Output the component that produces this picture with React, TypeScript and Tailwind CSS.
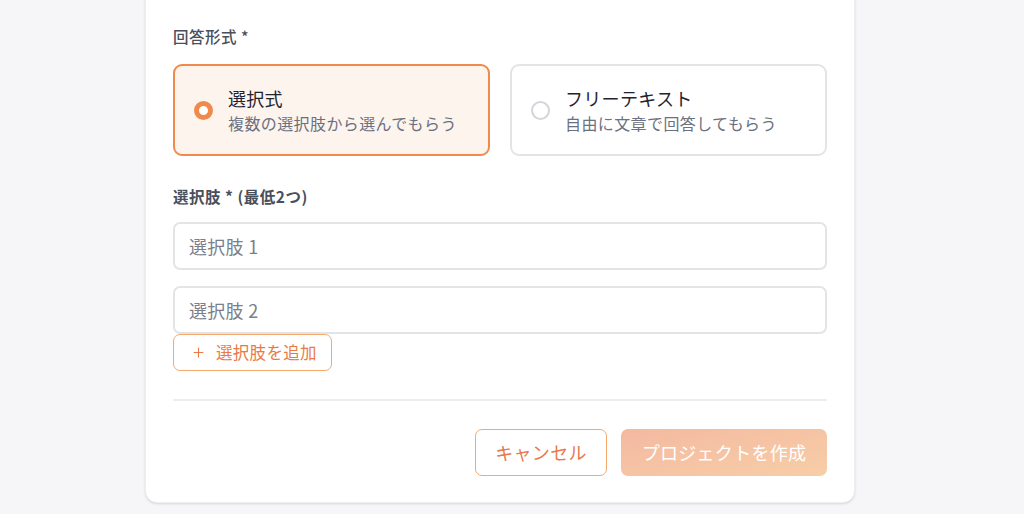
import { Plus } from "lucide-react";

const font = { fontFamily: '"Noto Sans CJK JP", "Noto Sans", sans-serif' };

function OptionCard({ selected, title, desc }: { selected: boolean; title: string; desc: string }) {
  return (
    <div
      className={`flex h-[92px] flex-1 items-center gap-[15px] rounded-[9px] border-2 px-[19px] ${
        selected ? "border-[#ef8a4c] bg-[#fdf4ee]" : "border-[#e3e4e8] bg-white"
      }`}
    >
      {selected ? (
        <span className="h-[19px] w-[19px] shrink-0 rounded-full border-[5px] border-[#ef8a4c] bg-white" />
      ) : (
        <span className="h-[19px] w-[19px] shrink-0 rounded-full border-2 border-[#d3d5da] bg-white" />
      )}
      <div className="flex flex-col">
        <span className="text-[18px] leading-[26px] tracking-[0.3px] text-[#1f2430]">{title}</span>
        <span className="text-[16px] leading-[24px] tracking-[0.4px] text-[#6b7180]">{desc}</span>
      </div>
    </div>
  );
}

export default function App() {
  return (
    <div className="h-[514px] overflow-hidden bg-[#f6f6f8]" style={font}>
      <div className="ml-[145px] -mt-[20px] w-[710px] rounded-xl border border-[#eceef1] bg-white px-[27px] pb-[26px] pt-[44px] shadow-sm">
        <label className="block text-[15.5px] font-medium leading-[22px] tracking-[0.5px] text-[#4a4f5c]">回答形式 *</label>
        <div className="mt-[17px] flex gap-[20px]">
          <OptionCard selected title="選択式" desc="複数の選択肢から選んでもらう" />
          <OptionCard selected={false} title="フリーテキスト" desc="自由に文章で回答してもらう" />
        </div>

        <label className="mt-[29px] block text-[15.5px] font-semibold leading-[22px] tracking-[0.5px] text-[#4a4f5c]">
          選択肢 * (最低2つ)
        </label>
        <div className="mt-[15px] flex flex-col gap-[16px]">
          <input
            placeholder="選択肢 1"
            className="h-[48px] w-full rounded-[7px] border-2 border-[#e3e4e8] px-[14px] text-[18px] tracking-[0.3px] text-[#1f2430] outline-none placeholder:text-[#7a7f8c]"
          />
          <input
            placeholder="選択肢 2"
            className="h-[48px] w-full rounded-[7px] border-2 border-[#e3e4e8] px-[14px] text-[18px] tracking-[0.3px] text-[#1f2430] outline-none placeholder:text-[#7a7f8c]"
          />
        </div>
        <button className="flex h-[37px] items-center gap-[10px] rounded-[7px] border-[1.5px] border-[#f5a96a] bg-white pl-[17px] pr-[14px] text-[16.5px] tracking-[0.3px] text-[#ea7a45]">
          <Plus size={15} strokeWidth={1.8} />
          選択肢を追加
        </button>

        <div className="mt-[28px] h-[2px] bg-[#ededf0]" />

        <div className="mt-[28px] flex justify-end gap-[14px]">
          <button className="h-[47px] w-[132px] rounded-[7px] border-[1.5px] border-[#f5a96a] bg-white text-[18px] tracking-[0.3px] text-[#e8794a]">
            キャンセル
          </button>
          <button className="h-[47px] w-[206px] rounded-[7px] bg-gradient-to-br from-[#f4b9a1] to-[#f7cea7] text-[18px] tracking-[0.3px] text-white">
            プロジェクトを作成
          </button>
        </div>
      </div>
    </div>
  );
}
